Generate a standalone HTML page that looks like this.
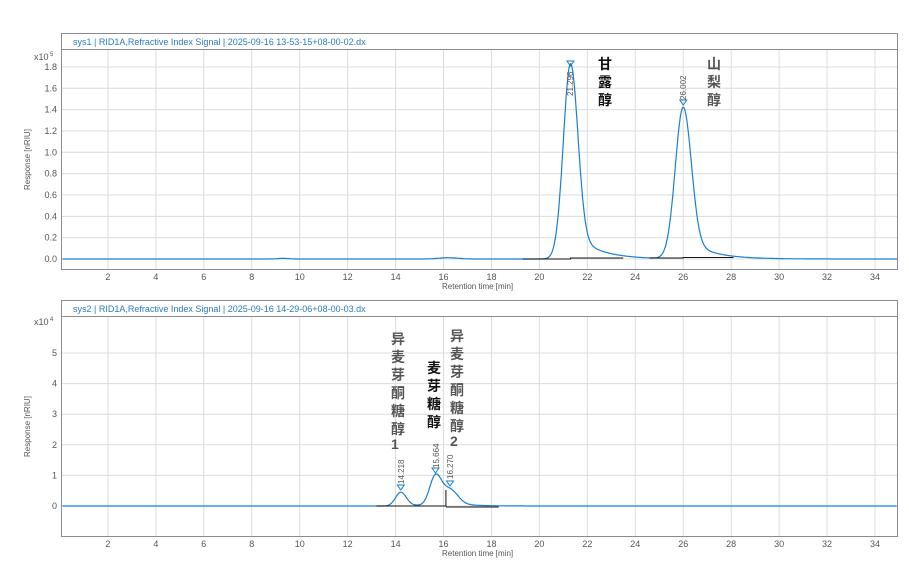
<!DOCTYPE html>
<html><head><meta charset="utf-8"><style>
body{margin:0;background:#fff;width:909px;height:579px;overflow:hidden}
svg{display:block;font-family:"Liberation Sans",sans-serif}
.cj{font-family:"Liberation Sans","Noto Sans CJK SC",sans-serif}
</style></head><body>
<svg id="s" width="909" height="579" xmlns="http://www.w3.org/2000/svg">
<g id="g1"></g>
<rect x="61.5" y="33.5" width="836" height="236" fill="none" stroke="#8a8a94"/>
<line x1="61" y1="49.5" x2="898" y2="49.5" stroke="#8a8a94"/>
<rect x="61.5" y="300.5" width="836" height="236" fill="none" stroke="#8a8a94"/>
<line x1="61" y1="316.5" x2="898" y2="316.5" stroke="#8a8a94"/>
<text x="73" y="45" font-size="9" fill="#2a7bc0">sys1 | RID1A,Refractive Index Signal | 2025-09-16 13-53-15+08-00-02.dx</text>
<text x="73" y="312" font-size="9" fill="#2a7bc0">sys2 | RID1A,Refractive Index Signal | 2025-09-16 14-29-06+08-00-03.dx</text>
<g font-size="9" fill="#555">
<text x="34" y="60">x10</text><text x="50" y="56" font-size="6">5</text>
<text x="34" y="325">x10</text><text x="50" y="321" font-size="6">4</text>
<text x="30" y="190" transform="rotate(-90 30 190)" font-size="8">Response [nRIU]</text>
<text x="30" y="457" transform="rotate(-90 30 457)" font-size="8">Response [nRIU]</text>
<text x="442" y="289" font-size="8">Retention time [min]</text>
<text x="442" y="556" font-size="8">Retention time [min]</text>
</g>
<g id="g2"></g>
<g class="cj" font-size="14" font-weight="bold" fill="#111">
<text x="598" y="69">甘</text><text x="598" y="87">露</text><text x="598" y="105">醇</text>
<text x="427" y="373">麦</text><text x="427" y="391">芽</text><text x="427" y="409">糖</text><text x="427" y="427">醇</text>
</g>
<g class="cj" font-size="14" font-weight="bold" fill="#555">
<text x="707" y="69">山</text><text x="707" y="87">梨</text><text x="707" y="105">醇</text>
<text x="391" y="344">异</text><text x="391" y="362">麦</text><text x="391" y="380">芽</text><text x="391" y="398">酮</text><text x="391" y="416">糖</text><text x="391" y="434">醇</text><text x="391" y="449">1</text>
<text x="450" y="341">异</text><text x="450" y="359">麦</text><text x="450" y="377">芽</text><text x="450" y="395">酮</text><text x="450" y="413">糖</text><text x="450" y="431">醇</text><text x="450" y="446">2</text>
</g>
<g font-size="8" fill="#555">
<text transform="translate(573,96) rotate(-90)">21.296</text>
<text transform="translate(686,100) rotate(-90)">26.002</text>
<text transform="translate(404,484) rotate(-90)">14.218</text>
<text transform="translate(439,468) rotate(-90)">15.664</text>
<text transform="translate(453,479) rotate(-90)">16.270</text>
</g>
</svg>
<script>
var NS="http://www.w3.org/2000/svg";
function el(p,t,a){var e=document.createElementNS(NS,t);for(var k in a)e.setAttribute(k,a[k]);p.appendChild(e);return e;}
var X=function(t){return 60+23.97*t;};
function panel(g,top,bot,y0,yScale,yLabels,fmt){
 for(var t=2;t<=34;t+=2){el(g,'line',{x1:X(t),x2:X(t),y1:top,y2:bot,stroke:'#dcdcdc'});
  var tx=el(g,'text',{x:X(t),y:bot+11,'font-size':9,fill:'#555','text-anchor':'middle'});tx.textContent=t;}
 yLabels.forEach(function(v){var y=y0-v*yScale;el(g,'line',{x1:62,x2:897,y1:y,y2:y,stroke:'#dcdcdc'});
  var tx=el(g,'text',{x:57,y:y+3,'font-size':9,fill:'#555','text-anchor':'end'});tx.textContent=fmt(v);});
}
function peak(t,t0,A,s,tau){var d=t-t0;var g=Math.exp(-d*d/(2*s*s));var tl=d>0?Math.exp(-d/tau)*(1-Math.exp(-d*d/(2*s*s))):0;return A*(g+0.15*tl);}
var g1=document.getElementById('g1');
panel(g1,50,269,259,106.7,[0,0.2,0.4,0.6,0.8,1,1.2,1.4,1.6,1.8],function(v){return v.toFixed(1);});
panel(g1,317,536,506,30.6,[0,1,2,3,4,5],function(v){return v;});
var g2=document.getElementById('g2');
function curve(y0,sc,f,t1,t2){var d='';for(var t=t1;t<=t2;t+=0.02){var y=y0-sc*f(t);d+=(d?'L':'M')+X(t).toFixed(1)+' '+y.toFixed(1);}el(g2,'path',{d:d,fill:'none',stroke:'#1a7fd0','stroke-width':1.2});}
curve(259,106.7,function(t){return peak(t,21.3,1.83,0.3,1.0)+peak(t,26.0,1.42,0.33,1.0)+0.012*Math.exp(-Math.pow(t-16.2,2)/0.3)+0.006*Math.exp(-Math.pow(t-9.3,2)/0.1);},0.1,33.3);
el(g2,'line',{x1:X(33.3),x2:897,y1:259,y2:259,stroke:'#1a7fd0','stroke-width':1.2});
curve(506,30.6,function(t){return peak(t,14.22,0.45,0.22,0.6)+peak(t,15.66,0.95,0.24,0.5)+peak(t,16.27,0.5,0.32,0.8);},0.1,34.9);
el(g2,'path',{d:'M'+X(19.3)+' 259H'+X(21.3)+'V258H'+X(23.5)+'M'+X(24.6)+' 258H'+X(26)+'V257.5H'+X(28.1),stroke:'#111',fill:'none'});
el(g2,'path',{d:'M'+X(13.2)+' 506H'+X(16.1)+'V490M'+X(16.1)+' 507H'+X(18.3),stroke:'#111',fill:'none'});
[[21.296,65],[26.002,104],[14.218,489],[15.664,472],[16.270,485]].forEach(function(p){var x=X(p[0]),y=p[1];
 el(g2,'path',{d:'M'+(x-3.5)+' '+(y-4)+'H'+(x+3.5)+'L'+x+' '+(y+1)+'Z',fill:'none',stroke:'#1a7fd0'});});
</script>
</body></html>
